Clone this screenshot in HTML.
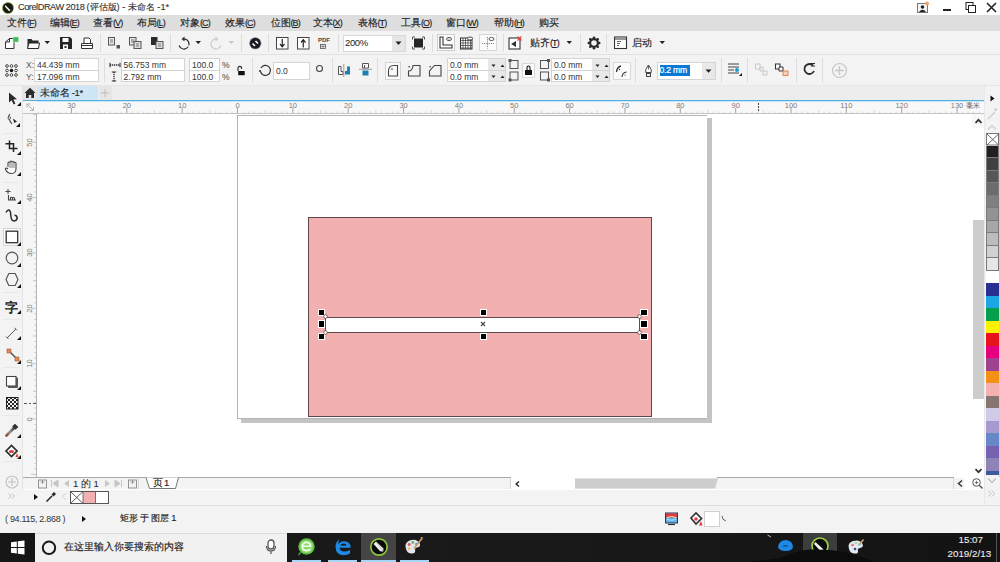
<!DOCTYPE html>
<html><head><meta charset="utf-8">
<style>
*{margin:0;padding:0;box-sizing:border-box}
html,body{width:1000px;height:562px;overflow:hidden;background:#fff;font-family:"Liberation Sans",sans-serif;position:relative}
.a{position:absolute;display:block}
.t{position:absolute;white-space:nowrap;color:#222}
</style></head><body>
<div class="a" style="left:0px;top:0px;width:1000px;height:15px;background:#fff;"></div>
<div class="a" style="left:0px;top:14.5px;width:1000px;height:16.5px;background:#dedede;"></div>
<div class="a" style="left:0px;top:31px;width:1000px;height:24px;background:#f3f3f3;"></div>
<div class="a" style="left:0px;top:54px;width:1000px;height:1px;background:#e2e2e2;"></div>
<div class="a" style="left:0px;top:55px;width:1000px;height:31px;background:#f3f3f3;"></div>
<div class="a" style="left:0px;top:85px;width:1000px;height:1px;background:#e6e6e6;"></div>
<div class="a" style="left:0px;top:86px;width:1000px;height:14px;background:#ededed;"></div>
<div class="a" style="left:0px;top:86px;width:23px;height:419px;background:#f3f3f3;"></div>
<div class="a" style="left:22px;top:86px;width:1px;height:419px;background:#e2e2e2;"></div>
<div class="a" style="left:23px;top:100px;width:961px;height:1px;background:#55b0de;"></div>
<div class="a" style="left:23px;top:101px;width:961px;height:1px;background:#c5e6f6;"></div>
<div class="a" style="left:23px;top:102px;width:961px;height:11px;background:#f8f8f8;"></div>
<div class="a" style="left:23px;top:101px;width:13px;height:376px;background:#f6f6f6;"></div>
<div class="a" style="left:37px;top:113px;width:936px;height:364px;background:#fff;"></div>
<div class="a" style="left:23px;top:113px;width:961px;height:1px;background:#c4c4c4;"></div>
<div class="a" style="left:36px;top:113px;width:1px;height:364px;background:#b4b4b4;"></div>
<div class="a" style="left:973px;top:114px;width:11px;height:363px;background:#fff;"></div>
<div class="a" style="left:972px;top:114px;width:12px;height:14px;background:#f7f7f7;"></div>
<div class="a" style="left:984px;top:86px;width:16px;height:419px;background:#f3f3f3;"></div>
<div class="a" style="left:23px;top:477px;width:488px;height:1px;background:#a9a9a9;"></div>
<div class="a" style="left:717px;top:477px;width:237px;height:1px;background:#a9a9a9;"></div>
<div class="a" style="left:23px;top:478px;width:961px;height:11px;background:#f3f3f3;"></div>
<div class="a" style="left:23px;top:489.5px;width:961px;height:1px;background:#e0e0e0;"></div>
<div class="a" style="left:0px;top:490px;width:984px;height:15px;background:#f3f3f3;"></div>
<div class="a" style="left:0px;top:505px;width:1000px;height:1px;background:#dedede;"></div>
<div class="a" style="left:0px;top:506px;width:1000px;height:27px;background:#f3f3f3;"></div>
<div class="a" style="left:0px;top:533px;width:1000px;height:29px;background:#141414;"></div>
<svg class="a" style="left:2px;top:2px;" width="12" height="12" viewBox="0 0 12 12"><circle cx="6" cy="6" r="5.6" fill="#1a1a1a" stroke="#9acd32" stroke-width="0.6"/><path d="M3.5 3.2 L8.5 8.2 L7.2 9.2 L2.8 4.5Z" fill="#fff"/></svg>
<div class="t" style="left:18px;top:3.49px;font-size:9.2px;line-height:9.2px;color:#333;-webkit-text-stroke:0.12px #333"><span style="letter-spacing:-0.45px">CorelDRAW 2018 </span>(评估版) - 未命名 -1*</div>
<svg class="a" style="left:916px;top:1px;" width="14" height="13" viewBox="0 0 14 13"><rect x="1.5" y="2.5" width="10" height="9" fill="#f4f4f4" stroke="#777" stroke-width="1"/><circle cx="6.5" cy="6" r="1.8" fill="#222"/><path d="M3 11 Q6.5 6.5 10 11Z" fill="#222"/><circle cx="11" cy="2.5" r="2" fill="#f0a060"/></svg>
<div class="a" style="left:943px;top:9px;width:8px;height:2px;background:#222;"></div>
<svg class="a" style="left:965px;top:2px;" width="12" height="11" viewBox="0 0 12 11"><rect x="1" y="0.5" width="7" height="7" fill="none" stroke="#222" stroke-width="1"/><rect x="3.5" y="3.5" width="7" height="7" fill="#fff" stroke="#222" stroke-width="1"/></svg>
<svg class="a" style="left:986px;top:2px;" width="11" height="11" viewBox="0 0 11 11"><path d="M1 1 L10 10 M10 1 L1 10" stroke="#222" stroke-width="1.6"/></svg>
<div class="t" style="left:7px;top:18.34px;font-size:9.5px;line-height:9.5px;color:#222;-webkit-text-stroke:0.15px #222">文件<span style="letter-spacing:-0.9px;font-size:9px">(<u>F</u>)</span></div>
<div class="t" style="left:49.5px;top:18.34px;font-size:9.5px;line-height:9.5px;color:#222;-webkit-text-stroke:0.15px #222">编辑<span style="letter-spacing:-0.9px;font-size:9px">(<u>E</u>)</span></div>
<div class="t" style="left:93px;top:18.34px;font-size:9.5px;line-height:9.5px;color:#222;-webkit-text-stroke:0.15px #222">查看<span style="letter-spacing:-0.9px;font-size:9px">(<u>V</u>)</span></div>
<div class="t" style="left:136.5px;top:18.34px;font-size:9.5px;line-height:9.5px;color:#222;-webkit-text-stroke:0.15px #222">布局<span style="letter-spacing:-0.9px;font-size:9px">(<u>L</u>)</span></div>
<div class="t" style="left:180px;top:18.34px;font-size:9.5px;line-height:9.5px;color:#222;-webkit-text-stroke:0.15px #222">对象<span style="letter-spacing:-0.9px;font-size:9px">(<u>C</u>)</span></div>
<div class="t" style="left:225px;top:18.34px;font-size:9.5px;line-height:9.5px;color:#222;-webkit-text-stroke:0.15px #222">效果<span style="letter-spacing:-0.9px;font-size:9px">(<u>C</u>)</span></div>
<div class="t" style="left:270.5px;top:18.34px;font-size:9.5px;line-height:9.5px;color:#222;-webkit-text-stroke:0.15px #222">位图<span style="letter-spacing:-0.9px;font-size:9px">(<u>B</u>)</span></div>
<div class="t" style="left:312.5px;top:18.34px;font-size:9.5px;line-height:9.5px;color:#222;-webkit-text-stroke:0.15px #222">文本<span style="letter-spacing:-0.9px;font-size:9px">(<u>X</u>)</span></div>
<div class="t" style="left:357.5px;top:18.34px;font-size:9.5px;line-height:9.5px;color:#222;-webkit-text-stroke:0.15px #222">表格<span style="letter-spacing:-0.9px;font-size:9px">(<u>T</u>)</span></div>
<div class="t" style="left:401px;top:18.34px;font-size:9.5px;line-height:9.5px;color:#222;-webkit-text-stroke:0.15px #222">工具<span style="letter-spacing:-0.9px;font-size:9px">(<u>O</u>)</span></div>
<div class="t" style="left:446px;top:18.34px;font-size:9.5px;line-height:9.5px;color:#222;-webkit-text-stroke:0.15px #222">窗口<span style="letter-spacing:-0.9px;font-size:9px">(<u>W</u>)</span></div>
<div class="t" style="left:494px;top:18.34px;font-size:9.5px;line-height:9.5px;color:#222;-webkit-text-stroke:0.15px #222">帮助<span style="letter-spacing:-0.9px;font-size:9px">(<u>H</u>)</span></div>
<div class="t" style="left:539px;top:18.34px;font-size:9.5px;line-height:9.5px;color:#222;-webkit-text-stroke:0.15px #222">购买</div>
<svg class="a" style="left:4px;top:36px;" width="16" height="14" viewBox="0 0 16 14"><path d="M5.5 2.5 H10 V12.5 H1.5 V6 Z M1.5 6 H5.5 V2.5" fill="#fff" stroke="#333" stroke-width="1"/><rect x="9" y="1" width="5.5" height="5" fill="#3dbb5b" stroke="#bdf0c8" stroke-width="0.5"/></svg>
<svg class="a" style="left:26px;top:36px;" width="15" height="14" viewBox="0 0 15 14"><path d="M1.5 3 H5.5 L6.5 4.5 H12.5 V12.5 H1.5 Z" fill="#2b2b2b"/><path d="M3 7 H13.5 L12.5 12.5 H1.5 Z" fill="#fafafa" stroke="#2b2b2b" stroke-width="1"/></svg>
<svg class="a" style="left:44px;top:40px;" width="7" height="5" viewBox="0 0 7 5"><path d="M0.5 1 H6 L3.25 4Z" fill="#222"/></svg>
<svg class="a" style="left:59px;top:36px;" width="14" height="14" viewBox="0 0 14 14"><path d="M1 1 H11 L13 3 V13 H1 Z" fill="#262626"/><rect x="3.5" y="2" width="6" height="4" fill="#fff"/><rect x="4" y="8.5" width="5" height="4.5" fill="#fff"/><rect x="5.5" y="10" width="2" height="2" fill="#262626"/></svg>
<svg class="a" style="left:80px;top:36px;" width="14" height="14" viewBox="0 0 14 14"><path d="M4 7.5 V2 H9 L10.5 3.5 V7.5" fill="#fff" stroke="#333" stroke-width="1"/><path d="M1.5 7.5 H12.5 V12.5 H1.5 Z" fill="#fff" stroke="#333" stroke-width="1"/><path d="M1.5 9.5 H12.5" stroke="#333" stroke-width="1"/></svg>
<div class="a" style="left:100px;top:34px;width:1px;height:18px;background:#dcdcdc;"></div>
<svg class="a" style="left:107px;top:36px;" width="14" height="14" viewBox="0 0 14 14"><rect x="1.5" y="1.5" width="6" height="7.5" fill="#e8e8e8" stroke="#555" stroke-width="1"/><path d="M3 4 H6 M3 6 H6" stroke="#555" stroke-width="0.8"/><rect x="9.5" y="9" width="3.5" height="3.5" fill="#555"/></svg>
<svg class="a" style="left:128px;top:36px;" width="14" height="14" viewBox="0 0 14 14"><rect x="1.5" y="1.5" width="6.5" height="7.5" fill="#e8e8e8" stroke="#555" stroke-width="1"/><path d="M3 4 H6.5 M3 6 H6.5" stroke="#555" stroke-width="0.8"/><rect x="6" y="5.5" width="7" height="7" fill="#ddd" stroke="#555" stroke-width="1"/><path d="M8 8 H11 M8 10 H11" stroke="#666" stroke-width="0.8"/></svg>
<svg class="a" style="left:150px;top:36px;" width="14" height="14" viewBox="0 0 14 14"><rect x="1" y="1" width="6.5" height="8" fill="#2b2b2b"/><rect x="6" y="5.5" width="7" height="7" fill="#ddd" stroke="#555" stroke-width="1"/><path d="M8 8 H11 M8 10 H11" stroke="#666" stroke-width="0.8"/></svg>
<div class="a" style="left:170px;top:34px;width:1px;height:18px;background:#dcdcdc;"></div>
<svg class="a" style="left:176px;top:36px;" width="15" height="14" viewBox="0 0 15 14"><path d="M8 3 A5 5 0 1 1 3.2 9.5" fill="none" stroke="#333" stroke-width="1.3" stroke-dasharray="9 1.5 20"/><path d="M8.5 0.5 L5.5 3 L8.5 5.5Z" fill="#333"/></svg>
<svg class="a" style="left:195px;top:40px;" width="7" height="5" viewBox="0 0 7 5"><path d="M0.5 1 H6 L3.25 4Z" fill="#222"/></svg>
<svg class="a" style="left:209px;top:36px;" width="15" height="14" viewBox="0 0 15 14"><path d="M7 3 A5 5 0 1 0 11.8 9.5" fill="none" stroke="#ccc" stroke-width="1.3"/><path d="M6.5 0.5 L9.5 3 L6.5 5.5Z" fill="#ccc"/></svg>
<svg class="a" style="left:228px;top:40px;" width="7" height="5" viewBox="0 0 7 5"><path d="M0.5 1 H6 L3.25 4Z" fill="#c8c8c8"/></svg>
<div class="a" style="left:241px;top:34px;width:1px;height:18px;background:#dcdcdc;"></div>
<svg class="a" style="left:249px;top:37px;" width="13" height="13" viewBox="0 0 13 13"><circle cx="6.3" cy="6.3" r="5.8" fill="#1e1a24" stroke="#b9a6d6" stroke-width="0.5"/><path d="M3.5 6.5 L6 9 M6.5 4 L9 6.5" stroke="#fff" stroke-width="1.6"/></svg>
<div class="a" style="left:268px;top:34px;width:1px;height:18px;background:#dcdcdc;"></div>
<svg class="a" style="left:276px;top:36px;" width="13" height="14" viewBox="0 0 13 14"><rect x="0.5" y="1.5" width="11.5" height="11.5" fill="#fff" stroke="#444" stroke-width="1"/><path d="M6.25 3 V10.5 M4 8 L6.25 10.8 L8.5 8" fill="none" stroke="#222" stroke-width="1.2"/></svg>
<svg class="a" style="left:297px;top:36px;" width="13" height="14" viewBox="0 0 13 14"><rect x="0.5" y="1.5" width="11.5" height="11.5" fill="#fff" stroke="#444" stroke-width="1"/><path d="M6.25 11.5 V4 M4 6.5 L6.25 3.7 L8.5 6.5" fill="none" stroke="#222" stroke-width="1.2"/></svg>
<div class="t" style="left:318px;top:37px;font-size:6px;line-height:6px;color:#444;font-weight:bold">PDF</div>
<svg class="a" style="left:320px;top:44px;" width="7" height="5" viewBox="0 0 7 5"><rect x="0.5" y="0.5" width="5" height="4" fill="none" stroke="#555" stroke-width="0.8"/><path d="M3 0.5 V4.5 M0.5 2.5 H5.5" stroke="#555" stroke-width="0.6"/></svg>
<div class="a" style="left:338px;top:34px;width:1px;height:18px;background:#dcdcdc;"></div>
<div class="a" style="left:343px;top:34.5px;width:63px;height:17px;background:#fff;border:1px solid #d9d9d9"></div>
<div class="a" style="left:392px;top:35.5px;width:13px;height:15px;background:#e6e6e6;"></div>
<div class="t" style="left:345px;top:38.34px;font-size:9.5px;line-height:9.5px;color:#222;letter-spacing:-0.4px">200%</div>
<svg class="a" style="left:395px;top:41px;" width="7" height="5" viewBox="0 0 7 5"><path d="M0.5 0.5 H6.5 L3.5 4Z" fill="#222"/></svg>
<svg class="a" style="left:411px;top:36px;" width="15" height="14" viewBox="0 0 15 14"><rect x="3" y="2.5" width="9" height="9" fill="#262626"/><path d="M1.5 3.5 V1 H4 M11 1 H13.5 V3.5 M13.5 10.5 V13 H11 M4 13 H1.5 V10.5" fill="none" stroke="#555" stroke-width="1"/></svg>
<div class="a" style="left:432px;top:34px;width:1px;height:18px;background:#dcdcdc;"></div>
<div class="a" style="left:437px;top:34px;width:18px;height:17px;background:#fbfbfb;border:1px solid #cfcfcf"></div>
<svg class="a" style="left:439px;top:36px;" width="14" height="13" viewBox="0 0 14 13"><path d="M1 1 V12 H13 V9 H4 V1 Z" fill="#fff" stroke="#333" stroke-width="1.1"/><ellipse cx="10" cy="3" rx="2.5" ry="1.6" fill="#fff" stroke="#444" stroke-width="0.9"/><circle cx="10" cy="3" r="0.6" fill="#444"/></svg>
<svg class="a" style="left:460px;top:36px;" width="14" height="14" viewBox="0 0 14 14"><rect x="0.5" y="2" width="11.5" height="11" fill="#fff" stroke="#333" stroke-width="1"/><path d="M3 2 V13 M5.5 2 V13 M8 2 V13 M10.5 2 V13 M0.5 4.5 H12 M0.5 7 H12 M0.5 9.5 H12 M0.5 12 H12" stroke="#333" stroke-width="0.7"/><ellipse cx="10" cy="2.5" rx="2.5" ry="1.5" fill="#fff" stroke="#444" stroke-width="0.9"/></svg>
<div class="a" style="left:479px;top:34px;width:18px;height:17px;background:#fbfbfb;border:1px solid #d6d6d6"></div>
<svg class="a" style="left:481px;top:36px;" width="14" height="13" viewBox="0 0 14 13"><path d="M6.5 1 V12.5 M1 7.5 H13" stroke="#666" stroke-width="0.8" stroke-dasharray="1.2 1"/><ellipse cx="10.5" cy="3" rx="2.5" ry="1.6" fill="#fff" stroke="#444" stroke-width="0.9"/></svg>
<div class="a" style="left:503px;top:34px;width:1px;height:18px;background:#dcdcdc;"></div>
<svg class="a" style="left:508px;top:36px;" width="15" height="14" viewBox="0 0 15 14"><rect x="1" y="2" width="11" height="11" fill="#fff" stroke="#333" stroke-width="1.1"/><path d="M3 8 L8 5 V11Z" fill="#333"/><path d="M9.5 0.5 L13.5 4.5 M13.5 0.5 L9.5 4.5" stroke="#e04040" stroke-width="1.1"/></svg>
<div class="t" style="left:530px;top:38.34px;font-size:9.5px;line-height:9.5px;color:#222;-webkit-text-stroke:0.15px #222">贴齐<span style="letter-spacing:-0.9px;font-size:9px">(<u>T</u>)</span></div>
<svg class="a" style="left:566px;top:40px;" width="7" height="5" viewBox="0 0 7 5"><path d="M0.5 1 H6 L3.25 4Z" fill="#222"/></svg>
<div class="a" style="left:580px;top:34px;width:1px;height:18px;background:#dcdcdc;"></div>
<svg class="a" style="left:587px;top:36px;" width="14" height="14" viewBox="0 0 14 14"><circle cx="7" cy="7" r="3.9" fill="none" stroke="#2b2b2b" stroke-width="2.2"/><g fill="#2b2b2b"><circle cx="7" cy="1.8" r="1.3"/><circle cx="7" cy="12.2" r="1.3"/><circle cx="1.8" cy="7" r="1.3"/><circle cx="12.2" cy="7" r="1.3"/><circle cx="3.3" cy="3.3" r="1.3"/><circle cx="10.7" cy="10.7" r="1.3"/><circle cx="10.7" cy="3.3" r="1.3"/><circle cx="3.3" cy="10.7" r="1.3"/></g></svg>
<div class="a" style="left:606px;top:34px;width:1px;height:18px;background:#dcdcdc;"></div>
<svg class="a" style="left:614px;top:36px;" width="14" height="14" viewBox="0 0 14 14"><rect x="0.5" y="1" width="12" height="11.5" fill="#fff" stroke="#333" stroke-width="1.1"/><path d="M0.5 3 H12.5" stroke="#333" stroke-width="1"/><path d="M3 5.5 H7 M3 7.5 H6 M3 9.5 H5" stroke="#555" stroke-width="0.9"/></svg>
<div class="t" style="left:632px;top:38.34px;font-size:9.5px;line-height:9.5px;color:#222;-webkit-text-stroke:0.15px #222">启动</div>
<svg class="a" style="left:659px;top:40px;" width="7" height="5" viewBox="0 0 7 5"><path d="M0.5 1 H6 L3.25 4Z" fill="#222"/></svg>
<svg class="a" style="left:5.3px;top:64.3px;" width="13" height="13" viewBox="0 0 13 13"><circle cx="2" cy="2" r="1.35" fill="#fff" stroke="#333" stroke-width="0.9"/><circle cx="2" cy="6.5" r="1.35" fill="#fff" stroke="#333" stroke-width="0.9"/><circle cx="2" cy="11" r="1.35" fill="#fff" stroke="#333" stroke-width="0.9"/><circle cx="6.5" cy="2" r="1.35" fill="#fff" stroke="#333" stroke-width="0.9"/><circle cx="6.5" cy="6.5" r="1.7" fill="#111"/><circle cx="6.5" cy="11" r="1.35" fill="#fff" stroke="#333" stroke-width="0.9"/><circle cx="11" cy="2" r="1.35" fill="#fff" stroke="#333" stroke-width="0.9"/><circle cx="11" cy="6.5" r="1.35" fill="#fff" stroke="#333" stroke-width="0.9"/><circle cx="11" cy="11" r="1.35" fill="#fff" stroke="#333" stroke-width="0.9"/></svg>
<div class="t" style="left:26px;top:61.34px;font-size:8.5px;line-height:8.5px;color:#555;">X:</div>
<div class="t" style="left:26px;top:73.33px;font-size:8.5px;line-height:8.5px;color:#555;">Y:</div>
<div class="a" style="left:34px;top:58px;width:65px;height:24px;background:#fff;border:1px solid #d4d4d4"></div>
<div class="a" style="left:34px;top:70px;width:65px;height:1px;background:#d4d4d4;"></div>
<div class="t" style="left:37px;top:60.63px;font-size:8.5px;line-height:8.5px;color:#333;">44.439 mm</div>
<div class="t" style="left:37px;top:73.03px;font-size:8.5px;line-height:8.5px;color:#333;">17.096 mm</div>
<div class="a" style="left:104px;top:58px;width:1px;height:25px;background:#dedede;"></div>
<svg class="a" style="left:109px;top:62px;" width="12" height="6" viewBox="0 0 12 6"><path d="M1 0.8 V5.2 M11 0.8 V5.2" stroke="#333" stroke-width="1.1"/><path d="M1 3 H11" stroke="#333" stroke-width="1.3" stroke-dasharray="1.3 0.7"/></svg>
<svg class="a" style="left:111px;top:71px;" width="6" height="11" viewBox="0 0 6 11"><path d="M0.8 1 H5.2 M0.8 10 H5.2" stroke="#333" stroke-width="1.1"/><path d="M3 1 V10" stroke="#333" stroke-width="1.3" stroke-dasharray="1.3 0.7"/></svg>
<div class="a" style="left:120.5px;top:58px;width:64px;height:24px;background:#fff;border:1px solid #d4d4d4"></div>
<div class="a" style="left:120.5px;top:70px;width:64px;height:1px;background:#d4d4d4;"></div>
<div class="t" style="left:123.5px;top:60.63px;font-size:8.5px;line-height:8.5px;color:#333;">56.753 mm</div>
<div class="t" style="left:123.5px;top:73.03px;font-size:8.5px;line-height:8.5px;color:#333;">2.792 mm</div>
<div class="a" style="left:189px;top:58px;width:30.5px;height:24px;background:#fff;border:1px solid #d4d4d4"></div>
<div class="a" style="left:189px;top:70px;width:30.5px;height:1px;background:#d4d4d4;"></div>
<div class="t" style="left:192px;top:60.63px;font-size:8.5px;line-height:8.5px;color:#333;">100.0</div>
<div class="t" style="left:192px;top:73.03px;font-size:8.5px;line-height:8.5px;color:#333;">100.0</div>
<div class="t" style="left:222px;top:60.63px;font-size:8.5px;line-height:8.5px;color:#444;">%</div>
<div class="t" style="left:222px;top:73.03px;font-size:8.5px;line-height:8.5px;color:#444;">%</div>
<svg class="a" style="left:236px;top:65px;" width="10" height="11" viewBox="0 0 10 11"><path d="M2 6 V3.2 A1.8 1.8 0 0 1 5.6 3.2 V4" fill="none" stroke="#222" stroke-width="1.1"/><rect x="2.2" y="6" width="6.5" height="4.2" fill="#111"/></svg>
<div class="a" style="left:251.5px;top:58px;width:1px;height:25px;background:#dedede;"></div>
<svg class="a" style="left:258px;top:63px;" width="14" height="14" viewBox="0 0 14 14"><path d="M3 5 A5 5 0 1 1 2.5 8.5" fill="none" stroke="#333" stroke-width="1.2"/><circle cx="2" cy="8" r="1" fill="#333"/></svg>
<div class="a" style="left:273px;top:62px;width:37px;height:18px;background:#fff;border:1px solid #d4d4d4"></div>
<div class="t" style="left:276px;top:66.83px;font-size:8.5px;line-height:8.5px;color:#333;">0.0</div>
<svg class="a" style="left:315px;top:64px;" width="9" height="9" viewBox="0 0 9 9"><circle cx="4.5" cy="4.5" r="3" fill="none" stroke="#444" stroke-width="1.1"/></svg>
<div class="a" style="left:331.5px;top:58px;width:1px;height:25px;background:#dedede;"></div>
<svg class="a" style="left:337px;top:63px;" width="15" height="15" viewBox="0 0 15 15"><path d="M1.5 3.5 V11.5 H6 V8.5 H4 V3.5 Z" fill="#fff" stroke="#555" stroke-width="1"/><path d="M6.8 1 V14" stroke="#888" stroke-width="0.8"/><path d="M8 11.5 H13 V3.5 H10 V8 H8Z" fill="#1f7fb0"/></svg>
<svg class="a" style="left:358px;top:62px;" width="15" height="16" viewBox="0 0 15 16"><path d="M4.5 1.5 H10.5 V6 H4.5 Z M6.5 3 V6" fill="#fff" stroke="#555" stroke-width="1"/><path d="M1 7.3 H14" stroke="#888" stroke-width="0.8"/><path d="M4.5 8.5 H10.5 V13.5 H4.5Z" fill="#1f7fb0"/></svg>
<div class="a" style="left:377px;top:58px;width:1px;height:25px;background:#dedede;"></div>
<div class="a" style="left:385px;top:62px;width:16px;height:18px;background:#fbfbfb;border:1px solid #d2d2d2"></div>
<svg class="a" style="left:387px;top:64px;" width="12" height="14" viewBox="0 0 12 14"><path d="M1.5 12 V7 Q1.5 1.5 7 1.5 H10.5 V12 Z" fill="none" stroke="#444" stroke-width="1.1"/><circle cx="5" cy="5" r="0.8" fill="#333"/></svg>
<svg class="a" style="left:407px;top:64px;" width="15" height="14" viewBox="0 0 15 14"><path d="M1.5 12 V7 Q5.5 7 6 1.5 H13 V12 Z" fill="none" stroke="#444" stroke-width="1.1"/><circle cx="2.2" cy="2.8" r="0.8" fill="#333"/></svg>
<svg class="a" style="left:428px;top:64px;" width="15" height="14" viewBox="0 0 15 14"><path d="M1.5 12 V7 L6.5 1.5 H13 V12 Z" fill="none" stroke="#444" stroke-width="1.1"/><circle cx="2.2" cy="2.8" r="0.8" fill="#333"/></svg>
<div class="a" style="left:447px;top:58px;width:59px;height:24px;background:#fff;border:1px solid #d4d4d4"></div>
<div class="a" style="left:488px;top:59px;width:17px;height:22px;background:#e8e8e8;"></div>
<div class="a" style="left:447px;top:70px;width:59px;height:1px;background:#d4d4d4;"></div>
<div class="t" style="left:450px;top:60.63px;font-size:8.5px;line-height:8.5px;color:#333;">0.0 mm</div>
<div class="t" style="left:450px;top:73.03px;font-size:8.5px;line-height:8.5px;color:#333;">0.0 mm</div>
<svg class="a" style="left:490.5px;top:63.5px;" width="5" height="3.5" viewBox="0 0 5 3.5"><path d="M0.5 0.5 H4.5 L2.5 3Z" fill="#222"/></svg>
<svg class="a" style="left:499.5px;top:63.5px;" width="5" height="3.5" viewBox="0 0 5 3.5"><path d="M0.5 3 H4.5 L2.5 0.5Z" fill="#222"/></svg>
<svg class="a" style="left:490.5px;top:75.0px;" width="5" height="3.5" viewBox="0 0 5 3.5"><path d="M0.5 0.5 H4.5 L2.5 3Z" fill="#222"/></svg>
<svg class="a" style="left:499.5px;top:75.0px;" width="5" height="3.5" viewBox="0 0 5 3.5"><path d="M0.5 3 H4.5 L2.5 0.5Z" fill="#222"/></svg>
<svg class="a" style="left:507px;top:58px;" width="12" height="25" viewBox="0 0 12 25"><rect x="3" y="2.5" width="8" height="8" fill="none" stroke="#444" stroke-width="0.9"/><rect x="1.5" y="1" width="3" height="3" fill="#555"/><rect x="3" y="14" width="8" height="8" fill="none" stroke="#444" stroke-width="0.9"/><rect x="1.5" y="20.5" width="3" height="3" fill="#555"/></svg>
<div class="a" style="left:522px;top:63px;width:13px;height:15px;background:#fbfbfb;border:1px solid #d8d8d8"></div>
<svg class="a" style="left:524px;top:65px;" width="9" height="11" viewBox="0 0 9 11"><path d="M3 5 V2.5 A1.5 1.5 0 0 1 6 2.5 V5" fill="none" stroke="#111" stroke-width="1.1"/><rect x="1" y="5" width="7" height="5" fill="#111"/></svg>
<svg class="a" style="left:539px;top:58px;" width="12" height="25" viewBox="0 0 12 25"><rect x="1.5" y="2.5" width="8" height="8" fill="none" stroke="#444" stroke-width="0.9"/><rect x="8" y="1" width="3" height="3" fill="#555"/><rect x="1.5" y="14" width="8" height="8" fill="none" stroke="#444" stroke-width="0.9"/><rect x="8" y="20.5" width="3" height="3" fill="#555"/></svg>
<div class="a" style="left:551px;top:58px;width:59px;height:24px;background:#fff;border:1px solid #d4d4d4"></div>
<div class="a" style="left:592px;top:59px;width:17px;height:22px;background:#e8e8e8;"></div>
<div class="a" style="left:551px;top:70px;width:59px;height:1px;background:#d4d4d4;"></div>
<div class="t" style="left:554px;top:60.63px;font-size:8.5px;line-height:8.5px;color:#333;">0.0 mm</div>
<div class="t" style="left:554px;top:73.03px;font-size:8.5px;line-height:8.5px;color:#333;">0.0 mm</div>
<svg class="a" style="left:594.5px;top:63.5px;" width="5" height="3.5" viewBox="0 0 5 3.5"><path d="M0.5 0.5 H4.5 L2.5 3Z" fill="#222"/></svg>
<svg class="a" style="left:603.5px;top:63.5px;" width="5" height="3.5" viewBox="0 0 5 3.5"><path d="M0.5 3 H4.5 L2.5 0.5Z" fill="#222"/></svg>
<svg class="a" style="left:594.5px;top:75.0px;" width="5" height="3.5" viewBox="0 0 5 3.5"><path d="M0.5 0.5 H4.5 L2.5 3Z" fill="#222"/></svg>
<svg class="a" style="left:603.5px;top:75.0px;" width="5" height="3.5" viewBox="0 0 5 3.5"><path d="M0.5 3 H4.5 L2.5 0.5Z" fill="#222"/></svg>
<div class="a" style="left:613px;top:62px;width:18px;height:18px;background:#fbfbfb;border:1px solid #d8d8d8"></div>
<svg class="a" style="left:615px;top:64px;" width="14" height="14" viewBox="0 0 14 14"><path d="M1.5 8 Q2 3 6 2" fill="none" stroke="#333" stroke-width="1.3"/><circle cx="4.5" cy="5.5" r="0.7" fill="#333"/><path d="M7 13 Q7.5 8.5 11.5 8" fill="none" stroke="#333" stroke-width="1.1"/><circle cx="10" cy="11" r="0.6" fill="#333"/></svg>
<div class="a" style="left:635px;top:58px;width:1px;height:25px;background:#dedede;"></div>
<svg class="a" style="left:644px;top:64px;" width="9" height="14" viewBox="0 0 9 14"><path d="M4.5 1 L7.2 5.5 V8.5 H1.8 V5.5 Z" fill="#fff" stroke="#444" stroke-width="1"/><path d="M4.5 2 V5.5" stroke="#444" stroke-width="0.8"/><rect x="2.5" y="9.5" width="4" height="3" fill="none" stroke="#444" stroke-width="1"/></svg>
<div class="a" style="left:657px;top:62px;width:59px;height:18px;background:#fff;border:1px solid #d4d4d4"></div>
<div class="a" style="left:701.5px;top:63px;width:13.5px;height:16px;background:#e8e8e8;"></div>
<div class="a" style="left:659.5px;top:65px;width:30.5px;height:11px;background:#0a78d4;"></div>
<div class="t" style="left:659.5px;top:66.39px;font-size:8.6px;line-height:8.6px;color:#fff;letter-spacing:-0.2px;-webkit-text-stroke:0.2px #fff">0.2 mm</div>
<svg class="a" style="left:705px;top:69px;" width="7" height="5" viewBox="0 0 7 5"><path d="M0.5 0.5 H6.5 L3.5 3.8Z" fill="#222"/></svg>
<div class="a" style="left:720.5px;top:58px;width:1px;height:25px;background:#dedede;"></div>
<svg class="a" style="left:727px;top:62px;" width="16" height="16" viewBox="0 0 16 16"><path d="M1 2 H12 M1 5 H12 M1 8 H7 M1 11 H12" stroke="#444" stroke-width="1.1"/><circle cx="10" cy="8" r="2" fill="#1a9ad6"/><path d="M12 14 L15 11 V14Z" fill="#111"/></svg>
<div class="a" style="left:747px;top:58px;width:1px;height:25px;background:#dedede;"></div>
<svg class="a" style="left:754px;top:62px;" width="14" height="15" viewBox="0 0 14 15"><path d="M1.5 2 H6 V7 H1.5Z M6 5 H9 V9 H13 V13 H9 V9 H6Z" fill="none" stroke="#c8c8c8" stroke-width="1"/></svg>
<svg class="a" style="left:774px;top:62px;" width="16" height="16" viewBox="0 0 16 16"><path d="M1.5 2 H6 V7 H1.5Z" fill="#fff" stroke="#333" stroke-width="1.1"/><path d="M5 5 H9 V9 H5Z" fill="#fff" stroke="#333" stroke-width="1"/><rect x="9" y="9" width="5" height="4.5" fill="#f6d3c0" stroke="#e07a40" stroke-width="0.9"/></svg>
<div class="a" style="left:796px;top:58px;width:1px;height:25px;background:#dedede;"></div>
<svg class="a" style="left:802px;top:62px;" width="15" height="15" viewBox="0 0 15 15"><path d="M11 3.5 A5 5 0 1 0 12 9" fill="none" stroke="#2b2b2b" stroke-width="1.8"/><path d="M8 1.5 H13 M9 4 H13" stroke="#2b2b2b" stroke-width="1"/></svg>
<div class="a" style="left:822px;top:58px;width:1px;height:25px;background:#dedede;"></div>
<svg class="a" style="left:831px;top:62px;" width="17" height="17" viewBox="0 0 17 17"><circle cx="8.5" cy="8.5" r="7" fill="none" stroke="#c6c6c6" stroke-width="1.2"/><path d="M8.5 4 V13 M4 8.5 H13" stroke="#c6c6c6" stroke-width="1.3"/></svg>
<div class="a" style="left:23px;top:86px;width:13.5px;height:14px;background:#e4e4e4;"></div>
<svg class="a" style="left:24px;top:87px;" width="12" height="12" viewBox="0 0 12 12"><path d="M6 0.8 L11.5 6 H10 V11 H7.3 V8 H4.7 V11 H2 V6 H0.5 Z" fill="#2b2b2b"/></svg>
<div class="a" style="left:36.5px;top:86px;width:61.5px;height:14px;background:#cfe5f8;"></div>
<div class="t" style="left:40px;top:87.84px;font-size:9.5px;line-height:9.5px;color:#2a2a2a;-webkit-text-stroke:0.15px #222;letter-spacing:-0.25px">未命名 -1*</div>
<div class="a" style="left:99px;top:86px;width:12.5px;height:14px;background:#e6e6e6;"></div>
<svg class="a" style="left:100px;top:88px;" width="10" height="10" viewBox="0 0 10 10"><path d="M5 1 V9 M1 5 H9" stroke="#bdbdbd" stroke-width="1"/></svg>
<svg class="a" style="left:23px;top:102px;" width="961" height="11" viewBox="0 0 961 11"><g stroke="#9a9a9a" stroke-width="0.9"><path d="M48.45 6 V11" /><path d="M103.80 6 V11" /><path d="M159.15 6 V11" /><path d="M214.50 6 V11" /><path d="M269.85 6 V11" /><path d="M325.20 6 V11" /><path d="M380.55 6 V11" /><path d="M435.90 6 V11" /><path d="M491.25 6 V11" /><path d="M546.60 6 V11" /><path d="M601.95 6 V11" /><path d="M657.30 6 V11" /><path d="M712.65 6 V11" /><path d="M768.00 6 V11" /><path d="M823.35 6 V11" /><path d="M878.70 6 V11" /><path d="M934.05 6 V11" /></g><g stroke="#cfcfcf" stroke-width="0.8"><path d="M15.24 9.5 V11" /><path d="M20.78 8 V11" /><path d="M26.31 9.5 V11" /><path d="M31.84 9.5 V11" /><path d="M37.38 9.5 V11" /><path d="M42.91 9.5 V11" /><path d="M53.98 9.5 V11" /><path d="M59.52 9.5 V11" /><path d="M65.06 9.5 V11" /><path d="M70.59 9.5 V11" /><path d="M76.12 8 V11" /><path d="M81.66 9.5 V11" /><path d="M87.20 9.5 V11" /><path d="M92.73 9.5 V11" /><path d="M98.26 9.5 V11" /><path d="M109.33 9.5 V11" /><path d="M114.87 9.5 V11" /><path d="M120.41 9.5 V11" /><path d="M125.94 9.5 V11" /><path d="M131.47 8 V11" /><path d="M137.01 9.5 V11" /><path d="M142.54 9.5 V11" /><path d="M148.08 9.5 V11" /><path d="M153.62 9.5 V11" /><path d="M164.69 9.5 V11" /><path d="M170.22 9.5 V11" /><path d="M175.75 9.5 V11" /><path d="M181.29 9.5 V11" /><path d="M186.82 8 V11" /><path d="M192.36 9.5 V11" /><path d="M197.90 9.5 V11" /><path d="M203.43 9.5 V11" /><path d="M208.97 9.5 V11" /><path d="M220.03 9.5 V11" /><path d="M225.57 9.5 V11" /><path d="M231.10 9.5 V11" /><path d="M236.64 9.5 V11" /><path d="M242.18 8 V11" /><path d="M247.71 9.5 V11" /><path d="M253.25 9.5 V11" /><path d="M258.78 9.5 V11" /><path d="M264.31 9.5 V11" /><path d="M275.38 9.5 V11" /><path d="M280.92 9.5 V11" /><path d="M286.46 9.5 V11" /><path d="M291.99 9.5 V11" /><path d="M297.52 8 V11" /><path d="M303.06 9.5 V11" /><path d="M308.60 9.5 V11" /><path d="M314.13 9.5 V11" /><path d="M319.67 9.5 V11" /><path d="M330.74 9.5 V11" /><path d="M336.27 9.5 V11" /><path d="M341.81 9.5 V11" /><path d="M347.34 9.5 V11" /><path d="M352.88 8 V11" /><path d="M358.41 9.5 V11" /><path d="M363.94 9.5 V11" /><path d="M369.48 9.5 V11" /><path d="M375.01 9.5 V11" /><path d="M386.09 9.5 V11" /><path d="M391.62 9.5 V11" /><path d="M397.15 9.5 V11" /><path d="M402.69 9.5 V11" /><path d="M408.23 8 V11" /><path d="M413.76 9.5 V11" /><path d="M419.30 9.5 V11" /><path d="M424.83 9.5 V11" /><path d="M430.37 9.5 V11" /><path d="M441.44 9.5 V11" /><path d="M446.97 9.5 V11" /><path d="M452.50 9.5 V11" /><path d="M458.04 9.5 V11" /><path d="M463.57 8 V11" /><path d="M469.11 9.5 V11" /><path d="M474.65 9.5 V11" /><path d="M480.18 9.5 V11" /><path d="M485.72 9.5 V11" /><path d="M496.78 9.5 V11" /><path d="M502.32 9.5 V11" /><path d="M507.86 9.5 V11" /><path d="M513.39 9.5 V11" /><path d="M518.92 8 V11" /><path d="M524.46 9.5 V11" /><path d="M530.00 9.5 V11" /><path d="M535.53 9.5 V11" /><path d="M541.07 9.5 V11" /><path d="M552.13 9.5 V11" /><path d="M557.67 9.5 V11" /><path d="M563.21 9.5 V11" /><path d="M568.74 9.5 V11" /><path d="M574.27 8 V11" /><path d="M579.81 9.5 V11" /><path d="M585.35 9.5 V11" /><path d="M590.88 9.5 V11" /><path d="M596.41 9.5 V11" /><path d="M607.49 9.5 V11" /><path d="M613.02 9.5 V11" /><path d="M618.56 9.5 V11" /><path d="M624.09 9.5 V11" /><path d="M629.62 8 V11" /><path d="M635.16 9.5 V11" /><path d="M640.69 9.5 V11" /><path d="M646.23 9.5 V11" /><path d="M651.77 9.5 V11" /><path d="M662.84 9.5 V11" /><path d="M668.37 9.5 V11" /><path d="M673.90 9.5 V11" /><path d="M679.44 9.5 V11" /><path d="M684.98 8 V11" /><path d="M690.51 9.5 V11" /><path d="M696.04 9.5 V11" /><path d="M701.58 9.5 V11" /><path d="M707.12 9.5 V11" /><path d="M718.19 9.5 V11" /><path d="M723.72 9.5 V11" /><path d="M729.25 9.5 V11" /><path d="M734.79 9.5 V11" /><path d="M740.33 8 V11" /><path d="M745.86 9.5 V11" /><path d="M751.39 9.5 V11" /><path d="M756.93 9.5 V11" /><path d="M762.47 9.5 V11" /><path d="M773.54 9.5 V11" /><path d="M779.07 9.5 V11" /><path d="M784.61 9.5 V11" /><path d="M790.14 9.5 V11" /><path d="M795.67 8 V11" /><path d="M801.21 9.5 V11" /><path d="M806.75 9.5 V11" /><path d="M812.28 9.5 V11" /><path d="M817.82 9.5 V11" /><path d="M828.88 9.5 V11" /><path d="M834.42 9.5 V11" /><path d="M839.96 9.5 V11" /><path d="M845.49 9.5 V11" /><path d="M851.02 8 V11" /><path d="M856.56 9.5 V11" /><path d="M862.10 9.5 V11" /><path d="M867.63 9.5 V11" /><path d="M873.17 9.5 V11" /><path d="M884.24 9.5 V11" /><path d="M889.77 9.5 V11" /><path d="M895.31 9.5 V11" /><path d="M900.84 9.5 V11" /><path d="M906.38 8 V11" /><path d="M911.91 9.5 V11" /><path d="M917.44 9.5 V11" /><path d="M922.98 9.5 V11" /><path d="M928.52 9.5 V11" /><path d="M939.59 9.5 V11" /><path d="M945.12 9.5 V11" /><path d="M950.65 9.5 V11" /><path d="M956.19 9.5 V11" /></g></svg>
<div class="t" style="left:56.45px;top:102px;width:30px;text-align:center;font-size:7.5px;line-height:7px;color:#7a7a7a">30</div>
<div class="t" style="left:111.80px;top:102px;width:30px;text-align:center;font-size:7.5px;line-height:7px;color:#7a7a7a">20</div>
<div class="t" style="left:167.15px;top:102px;width:30px;text-align:center;font-size:7.5px;line-height:7px;color:#7a7a7a">10</div>
<div class="t" style="left:222.50px;top:102px;width:30px;text-align:center;font-size:7.5px;line-height:7px;color:#7a7a7a">0</div>
<div class="t" style="left:277.85px;top:102px;width:30px;text-align:center;font-size:7.5px;line-height:7px;color:#7a7a7a">10</div>
<div class="t" style="left:333.20px;top:102px;width:30px;text-align:center;font-size:7.5px;line-height:7px;color:#7a7a7a">20</div>
<div class="t" style="left:388.55px;top:102px;width:30px;text-align:center;font-size:7.5px;line-height:7px;color:#7a7a7a">30</div>
<div class="t" style="left:443.90px;top:102px;width:30px;text-align:center;font-size:7.5px;line-height:7px;color:#7a7a7a">40</div>
<div class="t" style="left:499.25px;top:102px;width:30px;text-align:center;font-size:7.5px;line-height:7px;color:#7a7a7a">50</div>
<div class="t" style="left:554.60px;top:102px;width:30px;text-align:center;font-size:7.5px;line-height:7px;color:#7a7a7a">60</div>
<div class="t" style="left:609.95px;top:102px;width:30px;text-align:center;font-size:7.5px;line-height:7px;color:#7a7a7a">70</div>
<div class="t" style="left:665.30px;top:102px;width:30px;text-align:center;font-size:7.5px;line-height:7px;color:#7a7a7a">80</div>
<div class="t" style="left:720.65px;top:102px;width:30px;text-align:center;font-size:7.5px;line-height:7px;color:#7a7a7a">90</div>
<div class="t" style="left:776.00px;top:102px;width:30px;text-align:center;font-size:7.5px;line-height:7px;color:#7a7a7a">100</div>
<div class="t" style="left:831.35px;top:102px;width:30px;text-align:center;font-size:7.5px;line-height:7px;color:#7a7a7a">110</div>
<div class="t" style="left:886.70px;top:102px;width:30px;text-align:center;font-size:7.5px;line-height:7px;color:#7a7a7a">120</div>
<div class="t" style="left:942.05px;top:102px;width:30px;text-align:center;font-size:7.5px;line-height:7px;color:#7a7a7a">130</div>
<div class="t" style="left:966px;top:102px;font-size:7px;line-height:7px;color:#555">毫米</div>
<svg class="a" style="left:26px;top:103px;" width="9" height="9" viewBox="0 0 9 9"><path d="M1 1 L7 7 M1 1 V4.5 M1 1 H4.5 M4 7.5 H7.5 V4" fill="none" stroke="#aaa" stroke-width="0.9"/></svg>
<div class="a" style="left:757.5px;top:103px;width:1.2px;height:9px;background:repeating-linear-gradient(#444 0 1.6px, transparent 1.6px 3.2px);"></div>
<svg class="a" style="left:23px;top:113px;" width="13" height="364" viewBox="0 0 13 364"><g stroke="#b8b8b8" stroke-width="0.8"><path d="M8 361.35 H13" /><path d="M11.5 355.81 H13" /><path d="M11.5 350.28 H13" /><path d="M11.5 344.75 H13" /><path d="M11.5 339.21 H13" /><path d="M10 333.68 H13" /><path d="M11.5 328.14 H13" /><path d="M11.5 322.61 H13" /><path d="M11.5 317.07 H13" /><path d="M11.5 311.54 H13" /><path d="M8 306.00 H13" /><path d="M11.5 300.46 H13" /><path d="M11.5 294.93 H13" /><path d="M11.5 289.39 H13" /><path d="M11.5 283.86 H13" /><path d="M10 278.32 H13" /><path d="M11.5 272.79 H13" /><path d="M11.5 267.25 H13" /><path d="M11.5 261.72 H13" /><path d="M11.5 256.19 H13" /><path d="M8 250.65 H13" /><path d="M11.5 245.12 H13" /><path d="M11.5 239.58 H13" /><path d="M11.5 234.04 H13" /><path d="M11.5 228.51 H13" /><path d="M10 222.98 H13" /><path d="M11.5 217.44 H13" /><path d="M11.5 211.90 H13" /><path d="M11.5 206.37 H13" /><path d="M11.5 200.83 H13" /><path d="M8 195.30 H13" /><path d="M11.5 189.76 H13" /><path d="M11.5 184.23 H13" /><path d="M11.5 178.69 H13" /><path d="M11.5 173.16 H13" /><path d="M10 167.62 H13" /><path d="M11.5 162.09 H13" /><path d="M11.5 156.56 H13" /><path d="M11.5 151.02 H13" /><path d="M11.5 145.49 H13" /><path d="M8 139.95 H13" /><path d="M11.5 134.41 H13" /><path d="M11.5 128.88 H13" /><path d="M11.5 123.34 H13" /><path d="M11.5 117.81 H13" /><path d="M10 112.28 H13" /><path d="M11.5 106.74 H13" /><path d="M11.5 101.20 H13" /><path d="M11.5 95.67 H13" /><path d="M11.5 90.13 H13" /><path d="M8 84.60 H13" /><path d="M11.5 79.06 H13" /><path d="M11.5 73.53 H13" /><path d="M11.5 67.99 H13" /><path d="M11.5 62.46 H13" /><path d="M10 56.93 H13" /><path d="M11.5 51.39 H13" /><path d="M11.5 45.85 H13" /><path d="M11.5 40.32 H13" /><path d="M11.5 34.78 H13" /><path d="M8 29.25 H13" /><path d="M11.5 23.72 H13" /><path d="M11.5 18.18 H13" /><path d="M11.5 12.64 H13" /><path d="M11.5 7.11 H13" /><path d="M10 1.57 H13" /></g></svg>
<div class="t" style="left:14px;top:415.50px;width:30px;text-align:center;font-size:7.5px;line-height:7px;color:#7a7a7a;transform:rotate(-90deg);transform-origin:15px 3.5px;left:14px">0</div>
<div class="t" style="left:14px;top:360.15px;width:30px;text-align:center;font-size:7.5px;line-height:7px;color:#7a7a7a;transform:rotate(-90deg);transform-origin:15px 3.5px;left:14px">10</div>
<div class="t" style="left:14px;top:304.80px;width:30px;text-align:center;font-size:7.5px;line-height:7px;color:#7a7a7a;transform:rotate(-90deg);transform-origin:15px 3.5px;left:14px">20</div>
<div class="t" style="left:14px;top:249.45px;width:30px;text-align:center;font-size:7.5px;line-height:7px;color:#7a7a7a;transform:rotate(-90deg);transform-origin:15px 3.5px;left:14px">30</div>
<div class="t" style="left:14px;top:194.10px;width:30px;text-align:center;font-size:7.5px;line-height:7px;color:#7a7a7a;transform:rotate(-90deg);transform-origin:15px 3.5px;left:14px">40</div>
<div class="t" style="left:14px;top:138.75px;width:30px;text-align:center;font-size:7.5px;line-height:7px;color:#7a7a7a;transform:rotate(-90deg);transform-origin:15px 3.5px;left:14px">50</div>
<div class="a" style="left:24px;top:403px;width:12px;height:1.2px;background:repeating-linear-gradient(90deg,#555 0 2.5px, transparent 2.5px 4.5px);"></div>
<div class="a" style="left:241px;top:419px;width:471px;height:4px;background:#c4c4c4;"></div>
<div class="a" style="left:707px;top:118px;width:5px;height:305px;background:#c4c4c4;"></div>
<div class="a" style="left:237px;top:115px;width:470px;height:304px;background:#fff;border:1px solid #b4b4b4;border-right:none;border-bottom:1px solid #b4b4b4"></div>
<div class="a" style="left:308px;top:217px;width:344px;height:199.5px;background:#f2b0b0;border:1.5px solid #5e474a"></div>
<div class="a" style="left:325.3px;top:316.6px;width:314.5px;height:16px;background:#fff;border:1.5px solid #5e4b4c"></div>
<div class="a" style="left:318.5px;top:309.6px;width:5.6px;height:5.4px;background:#000;outline:0.8px solid #fff"></div>
<div class="a" style="left:318.5px;top:321.2px;width:5.6px;height:5.4px;background:#000;outline:0.8px solid #fff"></div>
<div class="a" style="left:318.5px;top:334px;width:5.6px;height:5.4px;background:#000;outline:0.8px solid #fff"></div>
<div class="a" style="left:480.6px;top:309.6px;width:5.6px;height:5.4px;background:#000;outline:0.8px solid #fff"></div>
<div class="a" style="left:480.6px;top:334px;width:5.6px;height:5.4px;background:#000;outline:0.8px solid #fff"></div>
<div class="a" style="left:641.2px;top:309.6px;width:5.6px;height:5.4px;background:#000;outline:0.8px solid #fff"></div>
<div class="a" style="left:641.2px;top:321.2px;width:5.6px;height:5.4px;background:#000;outline:0.8px solid #fff"></div>
<div class="a" style="left:641.2px;top:334px;width:5.6px;height:5.4px;background:#000;outline:0.8px solid #fff"></div>
<svg class="a" style="left:479px;top:320px;" width="8" height="8" viewBox="0 0 8 8"><path d="M2 2 L6 6 M6 2 L2 6" stroke="#444" stroke-width="1.1"/></svg>
<svg class="a" style="left:323.0px;top:314.3px;" width="5" height="5" viewBox="0 0 5 5"><circle cx="2.5" cy="2.5" r="1.8" fill="#fff" stroke="#5e4b4c" stroke-width="0.8"/></svg>
<svg class="a" style="left:323.0px;top:329.7px;" width="5" height="5" viewBox="0 0 5 5"><circle cx="2.5" cy="2.5" r="1.8" fill="#fff" stroke="#5e4b4c" stroke-width="0.8"/></svg>
<svg class="a" style="left:637.0px;top:314.3px;" width="5" height="5" viewBox="0 0 5 5"><circle cx="2.5" cy="2.5" r="1.8" fill="#fff" stroke="#5e4b4c" stroke-width="0.8"/></svg>
<svg class="a" style="left:637.0px;top:329.7px;" width="5" height="5" viewBox="0 0 5 5"><circle cx="2.5" cy="2.5" r="1.8" fill="#fff" stroke="#5e4b4c" stroke-width="0.8"/></svg>
<svg class="a" style="left:8px;top:92px;" width="10" height="13" viewBox="0 0 10 13"><path d="M1 0.5 L1 10.5 L3.6 8.2 L5.6 12.5 L7.4 11.6 L5.4 7.4 L9 7.3 Z" fill="#2b2b2b"/></svg>
<svg class="a" style="left:17px;top:102px;" width="4" height="4" viewBox="0 0 4 4"><path d="M4 0 V4 H0Z" fill="#111"/></svg>
<svg class="a" style="left:6px;top:112px;" width="13" height="15" viewBox="0 0 13 15"><path d="M4 2 Q1.5 5 3 7 Q4 9.5 6 12" fill="none" stroke="#444" stroke-width="1.1"/><circle cx="3.3" cy="6" r="1.3" fill="#fff" stroke="#444" stroke-width="0.8"/><path d="M7 6.5 L11 9.5 L8.2 11Z" fill="#2b2b2b"/></svg>
<svg class="a" style="left:16px;top:123px;" width="4" height="4" viewBox="0 0 4 4"><path d="M4 0 V4 H0Z" fill="#111"/></svg>
<div class="a" style="left:3px;top:133px;width:17px;height:1px;background:#e8e8e8;"></div>
<svg class="a" style="left:4px;top:139px;" width="16" height="15" viewBox="0 0 16 15"><path d="M5.5 1.5 V9.5 H13.5 M1.5 4.7 H9.5 V13" fill="none" stroke="#222" stroke-width="1.5"/></svg>
<svg class="a" style="left:17px;top:151px;" width="4" height="4" viewBox="0 0 4 4"><path d="M4 0 V4 H0Z" fill="#111"/></svg>
<svg class="a" style="left:4px;top:160px;" width="16" height="16" viewBox="0 0 16 16"><path d="M4 7 V3 Q4 2 5 2 Q6 2 6 3 V2 Q6 1 7 1 Q8 1 8 2 V2.5 Q8 1.5 9 1.5 Q10 1.5 10 2.5 V3 Q10 2.2 11 2.2 Q12 2.2 12 3.2 V8.5 Q12 13.5 7.5 13.5 Q3.5 13.5 1.5 9.5 Q1 8 2.5 8 L4 9" fill="#fff" stroke="#444" stroke-width="1.1"/><path d="M6 3 V8 M8 2.5 V8 M10 3 V8" stroke="#555" stroke-width="0.8"/></svg>
<svg class="a" style="left:17px;top:172px;" width="4" height="4" viewBox="0 0 4 4"><path d="M4 0 V4 H0Z" fill="#111"/></svg>
<div class="a" style="left:3px;top:182px;width:17px;height:1px;background:#e8e8e8;"></div>
<svg class="a" style="left:5px;top:187px;" width="14" height="15" viewBox="0 0 14 15"><path d="M3 2 V7 M0.5 4.5 H5.5" stroke="#444" stroke-width="1"/><path d="M3.5 8 V13 H11 M5.5 13 V10.5 Q6.5 10 7.5 10.5 V13 M7.5 11 Q8.5 10 9.5 11 V13" fill="none" stroke="#444" stroke-width="1.1"/></svg>
<svg class="a" style="left:16.5px;top:200px;" width="4" height="4" viewBox="0 0 4 4"><path d="M4 0 V4 H0Z" fill="#111"/></svg>
<svg class="a" style="left:5px;top:207px;" width="14" height="16" viewBox="0 0 14 16"><path d="M1 5.5 Q2.5 2.5 4.5 3.2 Q5.8 4.5 5.8 8.5 Q6.2 14 9 14 Q12.2 13.5 12.2 10.8 Q11.8 8.2 9.5 8.2" fill="none" stroke="#2b2b2b" stroke-width="1.5"/></svg>
<div class="a" style="left:3px;top:228px;width:18px;height:18px;background:#fbfbfb;border:1px solid #d4d4d4"></div>
<svg class="a" style="left:5px;top:230px;" width="14" height="14" viewBox="0 0 14 14"><rect x="1.2" y="1.2" width="11.5" height="11.5" fill="#fff" stroke="#333" stroke-width="1.3"/></svg>
<svg class="a" style="left:17px;top:242px;" width="4" height="4" viewBox="0 0 4 4"><path d="M4 0 V4 H0Z" fill="#111"/></svg>
<svg class="a" style="left:5px;top:251px;" width="14" height="14" viewBox="0 0 14 14"><circle cx="7" cy="7" r="5.8" fill="none" stroke="#555" stroke-width="1.2"/></svg>
<svg class="a" style="left:17px;top:263px;" width="4" height="4" viewBox="0 0 4 4"><path d="M4 0 V4 H0Z" fill="#111"/></svg>
<svg class="a" style="left:5px;top:272px;" width="14" height="15" viewBox="0 0 14 15"><path d="M3.8 1.5 H10.2 L13 7.5 L10.2 13.5 H3.8 L1 7.5 Z" fill="none" stroke="#555" stroke-width="1.2"/></svg>
<svg class="a" style="left:17px;top:284px;" width="4" height="4" viewBox="0 0 4 4"><path d="M4 0 V4 H0Z" fill="#111"/></svg>
<div class="a" style="left:3px;top:292px;width:17px;height:1px;background:#e8e8e8;"></div>
<div class="t" style="left:5px;top:300.5px;font-size:12.5px;line-height:14px;font-weight:bold;color:#222">字</div>
<svg class="a" style="left:17px;top:310px;" width="4" height="4" viewBox="0 0 4 4"><path d="M4 0 V4 H0Z" fill="#111"/></svg>
<div class="a" style="left:3px;top:319px;width:17px;height:1px;background:#e8e8e8;"></div>
<svg class="a" style="left:5px;top:327px;" width="14" height="13" viewBox="0 0 14 13"><path d="M2 11 L11 2" stroke="#555" stroke-width="1"/><path d="M1 9.5 L3.5 12 M9.5 0.8 L12 3.3" stroke="#555" stroke-width="0.9"/></svg>
<svg class="a" style="left:17px;top:336px;" width="4" height="4" viewBox="0 0 4 4"><path d="M4 0 V4 H0Z" fill="#111"/></svg>
<svg class="a" style="left:5.5px;top:347px;" width="14" height="17" viewBox="0 0 14 17"><path d="M3 4 L11 12" stroke="#444" stroke-width="1.2"/><rect x="1" y="2" width="4" height="4" fill="#e38a55" stroke="#a45a30" stroke-width="0.6"/><rect x="9" y="10" width="4" height="4" fill="#e38a55" stroke="#a45a30" stroke-width="0.6"/></svg>
<svg class="a" style="left:17px;top:360px;" width="4" height="4" viewBox="0 0 4 4"><path d="M4 0 V4 H0Z" fill="#111"/></svg>
<div class="a" style="left:3px;top:367px;width:17px;height:1px;background:#e8e8e8;"></div>
<svg class="a" style="left:5px;top:375px;" width="15" height="15" viewBox="0 0 15 15"><path d="M10.5 3 H12.5 V12.5 H3.5 V10.5" fill="#666" stroke="#555" stroke-width="1"/><rect x="1.5" y="1.5" width="9.5" height="9.5" fill="#fff" stroke="#444" stroke-width="1.1"/></svg>
<svg class="a" style="left:17px;top:386px;" width="4" height="4" viewBox="0 0 4 4"><path d="M4 0 V4 H0Z" fill="#111"/></svg>
<svg class="a" style="left:6px;top:397px;" width="12.5" height="12.5" viewBox="0 0 12.5 12.5"><rect x="0" y="0" width="2" height="2" fill="#222"/><rect x="0" y="4" width="2" height="2" fill="#222"/><rect x="0" y="8" width="2" height="2" fill="#222"/><rect x="2" y="2" width="2" height="2" fill="#222"/><rect x="2" y="6" width="2" height="2" fill="#222"/><rect x="2" y="10" width="2" height="2" fill="#222"/><rect x="4" y="0" width="2" height="2" fill="#222"/><rect x="4" y="4" width="2" height="2" fill="#222"/><rect x="4" y="8" width="2" height="2" fill="#222"/><rect x="6" y="2" width="2" height="2" fill="#222"/><rect x="6" y="6" width="2" height="2" fill="#222"/><rect x="6" y="10" width="2" height="2" fill="#222"/><rect x="8" y="0" width="2" height="2" fill="#222"/><rect x="8" y="4" width="2" height="2" fill="#222"/><rect x="8" y="8" width="2" height="2" fill="#222"/><rect x="10" y="2" width="2" height="2" fill="#222"/><rect x="10" y="6" width="2" height="2" fill="#222"/><rect x="10" y="10" width="2" height="2" fill="#222"/><rect x="0.5" y="0.5" width="11.5" height="11.5" fill="none" stroke="#222" stroke-width="1"/></svg>
<div class="a" style="left:3px;top:415px;width:17px;height:1px;background:#e8e8e8;"></div>
<svg class="a" style="left:5px;top:423px;" width="14" height="15" viewBox="0 0 14 15"><defs><linearGradient id="ed" x1="1" y1="0" x2="0" y2="1"><stop offset="0" stop-color="#444"/><stop offset="0.5" stop-color="#999"/><stop offset="1" stop-color="#8a4a2a"/></linearGradient></defs><path d="M1.5 12.5 L8.5 5.5" stroke="url(#ed)" stroke-width="2.6" stroke-linecap="round"/><path d="M8 3.5 L10 1.5 L12.5 4 L10.5 6Z" fill="#333" stroke="#333" stroke-width="1.2"/></svg>
<svg class="a" style="left:17px;top:434px;" width="4" height="4" viewBox="0 0 4 4"><path d="M4 0 V4 H0Z" fill="#111"/></svg>
<svg class="a" style="left:4px;top:444px;" width="17" height="16" viewBox="0 0 17 16"><path d="M2 7 L7.5 1.5 L13 7 L7.5 12.5 Z" fill="#fff" stroke="#2b2b2b" stroke-width="1.7"/><ellipse cx="7.5" cy="7.5" rx="2.6" ry="1.6" fill="#e23a3a"/><path d="M13 9 L14.5 13 H11.5Z" fill="#e23a3a"/></svg>
<svg class="a" style="left:17px;top:455px;" width="4" height="4" viewBox="0 0 4 4"><path d="M4 0 V4 H0Z" fill="#111"/></svg>
<div class="a" style="left:3px;top:461px;width:17px;height:1px;background:#e8e8e8;"></div>
<svg class="a" style="left:5px;top:475px;" width="14" height="14" viewBox="0 0 14 14"><circle cx="7" cy="7" r="6" fill="none" stroke="#c2c2c2" stroke-width="1.1"/><path d="M7 3 V11 M3 7 H11" stroke="#c2c2c2" stroke-width="1.2"/></svg>
<svg class="a" style="left:8px;top:493px;" width="8" height="6" viewBox="0 0 8 6"><path d="M0.5 0.5 L3 3 L0.5 5.5 M4 0.5 L6.5 3 L4 5.5" fill="none" stroke="#bbb" stroke-width="0.9"/></svg>
<svg class="a" style="left:974px;top:118px;" width="9" height="6" viewBox="0 0 9 6"><path d="M1.5 4.8 L4.5 1.8 L7.5 4.8" fill="none" stroke="#333" stroke-width="1.7"/></svg>
<div class="a" style="left:973px;top:220px;width:11px;height:179px;background:#cdcdcd;"></div>
<svg class="a" style="left:974px;top:467.5px;" width="9" height="6" viewBox="0 0 9 6"><path d="M1.5 1.2 L4.5 4.2 L7.5 1.2" fill="none" stroke="#333" stroke-width="1.7"/></svg>
<svg class="a" style="left:989px;top:94px;" width="7" height="9" viewBox="0 0 7 9"><path d="M1.5 1.5 L5.5 4.5 L1.5 7.5Z" fill="#111"/></svg>
<svg class="a" style="left:986px;top:107px;" width="12" height="14" viewBox="0 0 12 14"><path d="M2 12 L9 5" stroke="#ccc" stroke-width="1.3"/><path d="M8 3 L10 1 L11.5 2.5 L9.5 4.5Z" fill="#ccc"/></svg>
<svg class="a" style="left:986px;top:123px;" width="12" height="8" viewBox="0 0 12 8"><path d="M2 6.5 L6 2.5 L10 6.5" fill="none" stroke="#ccc" stroke-width="1.2"/></svg>
<svg class="a" style="left:986px;top:133px;" width="13" height="12.5" viewBox="0 0 13 12.5"><rect x="0.5" y="0.5" width="12" height="11.5" fill="#fff" stroke="#777" stroke-width="1"/><path d="M1 1 L12.5 12 M12.5 1 L1 12" stroke="#444" stroke-width="0.8"/></svg>
<div class="a" style="left:986px;top:145.5px;width:13px;height:12.5px;background:#231f20;border:1px solid #7a7a7a;border-top:none"></div>
<div class="a" style="left:986px;top:158.0px;width:13px;height:12.5px;background:#404040;border:1px solid #7a7a7a;border-top:none"></div>
<div class="a" style="left:986px;top:170.5px;width:13px;height:12.5px;background:#575757;border:1px solid #7a7a7a;border-top:none"></div>
<div class="a" style="left:986px;top:183.0px;width:13px;height:12.5px;background:#6c6c6c;border:1px solid #7a7a7a;border-top:none"></div>
<div class="a" style="left:986px;top:195.5px;width:13px;height:12.5px;background:#808080;border:1px solid #7a7a7a;border-top:none"></div>
<div class="a" style="left:986px;top:208.0px;width:13px;height:12.5px;background:#939393;border:1px solid #7a7a7a;border-top:none"></div>
<div class="a" style="left:986px;top:220.5px;width:13px;height:12.5px;background:#a7a7a7;border:1px solid #7a7a7a;border-top:none"></div>
<div class="a" style="left:986px;top:233.0px;width:13px;height:12.5px;background:#bcbcbc;border:1px solid #7a7a7a;border-top:none"></div>
<div class="a" style="left:986px;top:245.5px;width:13px;height:12.5px;background:#d1d1d1;border:1px solid #7a7a7a;border-top:none"></div>
<div class="a" style="left:986px;top:258.0px;width:13px;height:12.5px;background:#e6e6e6;border:1px solid #7a7a7a;border-top:none"></div>
<div class="a" style="left:986px;top:270.5px;width:13px;height:12.8px;background:#fff;"></div>
<div class="a" style="left:986px;top:283.3px;width:13px;height:12.5px;background:#2a2f92;"></div>
<div class="a" style="left:986px;top:295.8px;width:13px;height:12.5px;background:#1ca6e6;"></div>
<div class="a" style="left:986px;top:308.3px;width:13px;height:12.5px;background:#06a04c;"></div>
<div class="a" style="left:986px;top:320.8px;width:13px;height:12.5px;background:#fff200;"></div>
<div class="a" style="left:986px;top:333.3px;width:13px;height:12.5px;background:#e8141c;"></div>
<div class="a" style="left:986px;top:345.8px;width:13px;height:12.5px;background:#e6007e;"></div>
<div class="a" style="left:986px;top:358.3px;width:13px;height:12.5px;background:#a0428f;"></div>
<div class="a" style="left:986px;top:370.8px;width:13px;height:12.5px;background:#f39117;"></div>
<div class="a" style="left:986px;top:383.3px;width:13px;height:12.5px;background:#f3b1b1;"></div>
<div class="a" style="left:986px;top:395.8px;width:13px;height:12.5px;background:#86766f;"></div>
<div class="a" style="left:986px;top:408.3px;width:13px;height:12.5px;background:#cfcbe6;"></div>
<div class="a" style="left:986px;top:420.8px;width:13px;height:12.5px;background:#a69ad0;"></div>
<div class="a" style="left:986px;top:433.3px;width:13px;height:12.5px;background:#6688c8;"></div>
<div class="a" style="left:986px;top:445.8px;width:13px;height:12.5px;background:#7762b0;"></div>
<div class="a" style="left:986px;top:458.3px;width:13px;height:12.5px;background:#8f84b8;"></div>
<div class="a" style="left:986px;top:470.8px;width:13px;height:4.199999999999989px;background:#3c5a9a;"></div>
<div class="a" style="left:999px;top:133px;width:1px;height:344px;background:#d0d0d0;"></div>
<svg class="a" style="left:987px;top:477px;" width="10" height="7" viewBox="0 0 10 7"><path d="M1 1.5 L5 5.5 L9 1.5" fill="none" stroke="#bbb" stroke-width="1.2"/></svg>
<svg class="a" style="left:988px;top:489.5px;" width="8" height="7" viewBox="0 0 8 7"><path d="M0.5 0.5 L3 3.5 L0.5 6.5 M4 0.5 L6.5 3.5 L4 6.5" fill="none" stroke="#bbb" stroke-width="0.9"/></svg>
<div class="a" style="left:984px;top:86px;width:1px;height:419px;background:#e8e8e8;"></div>
<svg class="a" style="left:37px;top:478px;" width="11" height="11" viewBox="0 0 11 11"><rect x="1.5" y="2" width="8" height="8" fill="none" stroke="#888" stroke-width="0.9"/><path d="M3.5 4 H7.5 M5.5 2 V6" stroke="#888" stroke-width="0.8"/></svg>
<svg class="a" style="left:50px;top:479px;" width="9" height="9" viewBox="0 0 9 9"><path d="M1.5 1 V8 M8 1 L3 4.5 L8 8Z" fill="#c6c6c6" stroke="#c6c6c6" stroke-width="1"/></svg>
<svg class="a" style="left:62px;top:479px;" width="8" height="9" viewBox="0 0 8 9"><path d="M7 1 L2 4.5 L7 8Z" fill="#c6c6c6"/></svg>
<div class="t" style="left:73px;top:478.85px;font-size:9.5px;line-height:9.5px;color:#222;">1 的 1</div>
<svg class="a" style="left:104px;top:479px;" width="8" height="9" viewBox="0 0 8 9"><path d="M1 1 L6 4.5 L1 8Z" fill="#c6c6c6"/></svg>
<svg class="a" style="left:114px;top:479px;" width="9" height="9" viewBox="0 0 9 9"><path d="M7.5 1 V8 M1 1 L6 4.5 L1 8Z" fill="#c6c6c6" stroke="#c6c6c6" stroke-width="1"/></svg>
<svg class="a" style="left:127px;top:478px;" width="11" height="11" viewBox="0 0 11 11"><rect x="1.5" y="2" width="8" height="8" fill="none" stroke="#888" stroke-width="0.9"/><path d="M3.5 4 H7.5 M5.5 2 V6" stroke="#888" stroke-width="0.8"/></svg>
<div class="a" style="left:138px;top:478px;width:1px;height:11px;background:#d6d6d6;"></div>
<svg class="a" style="left:145px;top:477px;" width="35" height="13" viewBox="0 0 35 13"><path d="M1 0.5 L4.5 11.5 H30.5 L33.5 0.5" fill="#fff" stroke="#777" stroke-width="1"/></svg>
<div class="t" style="left:153px;top:478.35px;font-size:9.5px;line-height:9.5px;color:#222;-webkit-text-stroke:0.15px #222">页<span style="margin-left:1px">1</span></div>
<div class="a" style="left:510px;top:478px;width:1px;height:11px;background:#d6d6d6;"></div>
<div class="a" style="left:511px;top:476px;width:64px;height:13px;background:#fff;"></div>
<svg class="a" style="left:514px;top:480px;" width="7" height="8" viewBox="0 0 7 8"><path d="M5 1.5 L2.2 4 L5 6.5" fill="none" stroke="#333" stroke-width="1.6"/></svg>
<svg class="a" style="left:575px;top:478px;" width="143" height="11" viewBox="0 0 143 11"><path d="M0 0.5 H143 L140 10.5 H0Z" fill="#cdcdcd"/></svg>
<div class="a" style="left:953px;top:478px;width:1px;height:11px;background:#d6d6d6;"></div>
<svg class="a" style="left:956px;top:479px;" width="8" height="9" viewBox="0 0 8 9"><path d="M6 1.5 L2.5 4.5 L6 7.5" fill="none" stroke="#333" stroke-width="1.5"/></svg>
<div class="a" style="left:964px;top:478px;width:20px;height:11px;background:#fff;"></div>
<svg class="a" style="left:971px;top:477px;" width="13" height="13" viewBox="0 0 13 13"><circle cx="5.5" cy="5.5" r="3.8" fill="none" stroke="#555" stroke-width="1"/><path d="M3.8 5.5 H7.2 M5.5 3.8 V7.2" stroke="#555" stroke-width="0.8"/><path d="M8.3 8.3 L11.5 11.5" stroke="#555" stroke-width="1.4"/></svg>
<svg class="a" style="left:33px;top:493px;" width="6" height="8" viewBox="0 0 6 8"><path d="M1 1 L5 4 L1 7Z" fill="#111"/></svg>
<svg class="a" style="left:45px;top:491px;" width="12" height="12" viewBox="0 0 12 12"><path d="M1.5 10.5 L7 5" stroke="#2b2b2b" stroke-width="1.6"/><path d="M6.5 3.5 L9 1 L11 3 L8.5 5.5Z" fill="#2b2b2b"/></svg>
<svg class="a" style="left:61px;top:492px;" width="6" height="9" viewBox="0 0 6 9"><path d="M5 1 L1.5 4.5 L5 8" fill="none" stroke="#ccc" stroke-width="0.9"/></svg>
<svg class="a" style="left:70px;top:491px;" width="39" height="13" viewBox="0 0 39 13"><rect x="0.5" y="0.5" width="38" height="12" fill="#fff" stroke="#555" stroke-width="1"/><path d="M0.5 0.5 L13 12.5 M13 0.5 L0.5 12.5" stroke="#333" stroke-width="0.8"/><rect x="13" y="1" width="12.5" height="11" fill="#f2b0b0"/><path d="M13 0.5 V12.5 M25.5 0.5 V12.5" stroke="#555" stroke-width="0.8"/></svg>
<div class="t" style="left:5px;top:514.59px;font-size:9px;line-height:9px;color:#333;letter-spacing:-0.3px">( 94.115, 2.868 )</div>
<svg class="a" style="left:81px;top:515px;" width="6" height="8" viewBox="0 0 6 8"><path d="M1 1 L5 4 L1 7Z" fill="#111"/></svg>
<div class="t" style="left:120px;top:514.44px;font-size:9.3px;line-height:9.3px;color:#222;-webkit-text-stroke:0.15px #222;letter-spacing:-0.2px">矩形 于 图层 1</div>
<svg class="a" style="left:664px;top:511px;" width="15" height="16" viewBox="0 0 15 16"><rect x="1.5" y="2" width="12" height="10" fill="#62b0e8" stroke="#2b3a55" stroke-width="1"/><rect x="2" y="2.5" width="11" height="4" fill="#e23a3a"/><path d="M3 6.5 Q7.5 4.5 12 6.5" fill="none" stroke="#fff" stroke-width="0.8"/><path d="M3 8.5 Q7.5 10 12 8.5" fill="none" stroke="#fff" stroke-width="0.6"/><path d="M4 13.5 H11" stroke="#333" stroke-width="1.2"/></svg>
<svg class="a" style="left:689px;top:511px;" width="16" height="16" viewBox="0 0 16 16"><path d="M2 7 L7 2 L12.5 7.5 L7 13 Z" fill="#fff" stroke="#333" stroke-width="1.7"/><circle cx="7" cy="8" r="1.8" fill="#e23a3a"/><path d="M12 10 L13.5 14.5 H10Z" fill="#e23a3a"/></svg>
<div class="a" style="left:704px;top:511px;width:16px;height:16px;background:#fff;border:1px solid #d0d0d0"></div>
<svg class="a" style="left:721px;top:515px;" width="6" height="8" viewBox="0 0 6 8"><path d="M1 1 Q1 5 5 6" fill="none" stroke="#555" stroke-width="0.9"/></svg>
<div class="a" style="left:0px;top:533px;width:1000px;height:29px;background:linear-gradient(90deg,#161616 0,#1a1a1a 40%,#171717 70%,#131313 100%);"></div>
<div class="a" style="left:35px;top:533px;width:252px;height:29px;background:#f1f1f1;border-top:1px solid #dcdcdc"></div>
<svg class="a" style="left:10px;top:540px;" width="16" height="15" viewBox="0 0 16 15"><path d="M1 2.2 L6.8 1.4 V7 H1Z M7.8 1.3 L14.5 0.4 V7 H7.8Z M1 8 H6.8 V13.6 L1 12.8Z M7.8 8 H14.5 V14.6 L7.8 13.7Z" fill="#fff"/></svg>
<svg class="a" style="left:41px;top:540px;" width="16" height="16" viewBox="0 0 16 16"><circle cx="8" cy="7.8" r="6.2" fill="none" stroke="#1a1a1a" stroke-width="2"/></svg>
<div class="t" style="left:64px;top:542.40px;font-size:10.4px;line-height:10.4px;color:#222;-webkit-text-stroke:0.15px #222">在这里输入你要搜索的内容</div>
<svg class="a" style="left:265px;top:539px;" width="12" height="16" viewBox="0 0 12 16"><rect x="3" y="1" width="6" height="9" rx="3" fill="#fff" stroke="#555" stroke-width="1.3"/><path d="M1.5 7 Q1.5 12 6 12 Q10.5 12 10.5 7 M6 12 V15" fill="none" stroke="#555" stroke-width="1.2"/></svg>
<div class="a" style="left:361px;top:533px;width:35px;height:29px;background:#454545;"></div>
<svg class="a" style="left:297px;top:537px;" width="19" height="19" viewBox="0 0 19 19"><circle cx="9.5" cy="9.5" r="8.2" fill="#5dc03c"/><circle cx="9.5" cy="9.5" r="6.6" fill="#8ed96b"/><path d="M5.3 9.3 H13.6 Q13.4 5.4 9.5 5.4 Q5.4 5.4 5.3 9.5 Q5.4 13.6 9.6 13.6 Q12 13.6 13.3 12" fill="none" stroke="#f4fff0" stroke-width="1.6"/><path d="M3.5 15.5 L1.5 18" stroke="#4aa82a" stroke-width="1.4"/></svg>
<svg class="a" style="left:334px;top:537px;" width="19" height="19" viewBox="0 0 19 19"><path d="M16.8 10.8 H5.6 Q6 14.6 10 14.6 Q13.2 14.6 16 12.9 V16.6 Q13.2 18.2 9.8 18.2 Q1.8 18.2 1.6 10 Q1.4 4.6 5.6 2.4 Q3.9 5 4.4 7.4 Q6.2 4.2 9.8 4.2 Q16.6 4.2 16.8 10.8Z M12.6 8.6 Q12.3 6.4 9.8 6.4 Q7.1 6.4 6.1 8.6Z" fill="#1f8ae6"/></svg>
<svg class="a" style="left:368.5px;top:536.5px;" width="20" height="20" viewBox="0 0 20 20"><circle cx="10" cy="10" r="8.2" fill="#0a0a0a" stroke="#8cc63a" stroke-width="1.7"/><path d="M4.5 7 L7 4.5 L14.5 11.5 L14.2 14.5 L11.2 14.2 Z" fill="#f0f0f0"/><path d="M7 4.5 L14.2 14.5" stroke="#888" stroke-width="0.5"/></svg>
<svg class="a" style="left:403px;top:536px;" width="21" height="20" viewBox="0 0 21 20"><path d="M3 13 Q0.8 7 6.5 4.5 Q13.5 2 16.8 7.5 Q18 11 14 11.5 Q11.5 12 12.2 14.5 Q12.5 18 8 17.5 Q4 17 3 13Z" fill="#dfe6ef"/><circle cx="6.2" cy="8.5" r="1.4" fill="#e85050"/><circle cx="9.8" cy="6.4" r="1.3" fill="#58b05a"/><circle cx="13.5" cy="8" r="1.3" fill="#3a8ee0"/><circle cx="6" cy="12.6" r="1.3" fill="#f2c040"/><path d="M11 12.5 L18.5 3" stroke="#c99a60" stroke-width="1.8"/><path d="M17.5 1 L20 1.5 L19 4Z" fill="#f0b070"/></svg>
<div class="a" style="left:292px;top:560px;width:29px;height:2px;background:#a6d6f7;"></div>
<div class="a" style="left:328px;top:560px;width:29px;height:2px;background:#a6d6f7;"></div>
<div class="a" style="left:361px;top:560px;width:35px;height:2px;background:#a6d6f7;"></div>
<div class="a" style="left:400px;top:560px;width:29px;height:2px;background:#a6d6f7;"></div>
<svg class="a" style="left:776px;top:538px;" width="18" height="14" viewBox="0 0 18 14"><path d="M2 9 Q3 2 10 2 Q16.5 2.5 17 9 Q16 13 10 13 Q3 13 2 9Z" fill="#1e88e5"/><path d="M6 8.5 Q9 6 13 8.5Z" fill="#0d3d70"/></svg>
<div class="a" style="left:803px;top:533px;width:34px;height:22px;background:#3d3d3d;"></div>
<svg class="a" style="left:810px;top:536px;" width="20" height="20" viewBox="0 0 20 20"><circle cx="10" cy="10" r="8" fill="#0a0a0a" stroke="#a4d63c" stroke-width="1.6"/><path d="M5.5 6 L13.5 13.5 L11.2 15.8 L4 8Z" fill="#f4f4f4"/></svg>
<svg class="a" style="left:846px;top:537px;" width="20" height="19" viewBox="0 0 20 19"><path d="M3 12 Q1 6 7 4 Q14 2 16.5 7 Q18 10 14 11 Q11 11.5 12 14 Q12.5 17 8 16.5 Q4 16 3 12Z" fill="#e4e8f0"/><circle cx="6.5" cy="8" r="1.3" fill="#e57373"/><circle cx="10" cy="6" r="1.3" fill="#a5d6a7"/><circle cx="13.5" cy="7.5" r="1.3" fill="#90caf9"/><circle cx="9" cy="12" r="1.3" fill="#2a4a8a"/><path d="M13 8 L17.5 2.5" stroke="#c9a06a" stroke-width="1.8"/></svg>
<svg class="a" style="left:750px;top:546px;" width="140" height="16" viewBox="0 0 140 16"><path d="M0 16 L30 12 Q45 5 60 3.5 Q80 3 95 6 Q110 10 125 16Z" fill="#0c0c0c"/></svg>
<svg class="a" style="left:767px;top:534px;" width="6" height="5" viewBox="0 0 6 5"><path d="M0.5 1 L4 3" stroke="#bbb" stroke-width="1"/></svg>
<div class="t" style="left:958.5px;top:535.20px;font-size:9.8px;line-height:9.8px;color:#eee;-webkit-text-stroke:0.1px #eee">15:07</div>
<div class="t" style="left:947.5px;top:549.20px;font-size:9.8px;line-height:9.8px;color:#eee;-webkit-text-stroke:0.1px #eee">2019/2/13</div>
<div class="a" style="left:996px;top:533px;width:1px;height:29px;background:#555;"></div>
</body></html>
